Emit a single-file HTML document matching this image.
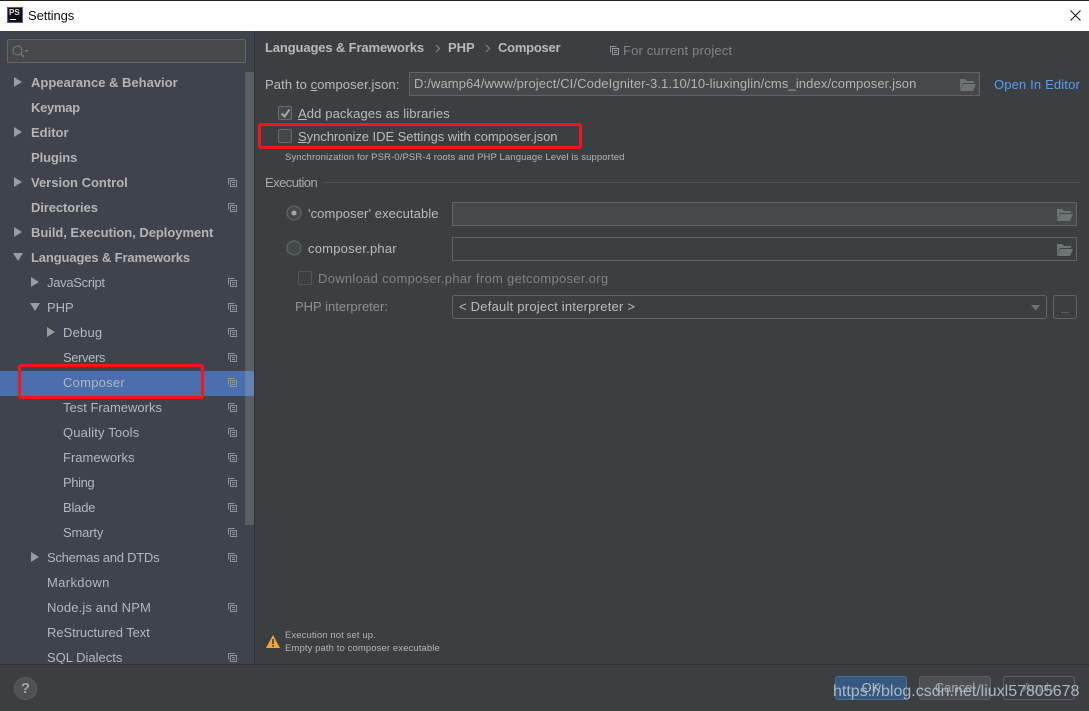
<!DOCTYPE html>
<html><head><meta charset="utf-8"><style>
html,body{margin:0;padding:0;width:1089px;height:711px;overflow:hidden;background:#3c3f41}
body{position:relative;font-family:"Liberation Sans",sans-serif;font-size:13px;color:#bbb}
.a{position:absolute;white-space:nowrap}
.t{position:absolute;white-space:nowrap;height:16px;line-height:16px}
.b{font-weight:bold;color:#b4b4b4}
.n{position:absolute;white-space:nowrap;height:16px;line-height:16px;color:#b4b8bb}
.box{position:absolute;box-sizing:border-box;border:1px solid #646464}
u{text-decoration:underline}
svg{position:absolute;overflow:visible}
</style></head><body>
<div class="a" style="left:0;top:0;width:1089px;height:1px;background:#222"></div>
<div class="a" style="left:0;top:1px;width:1089px;height:30px;background:#fff"></div>
<div class="a" style="left:7px;top:7px;width:16px;height:16px;box-sizing:border-box;background:#111;border:1px solid #7a45c4"></div>
<div class="a" style="left:9px;top:8px;font:bold 8px/10px 'Liberation Sans';color:#ddd">PS</div>
<div class="a" style="left:10px;top:19px;width:6px;height:1px;background:#fff"></div>
<div class="t" style="left:28px;top:8px;color:#111;font-size:13px;letter-spacing:-.1px">Settings</div>
<svg style="left:1070px;top:10px" width="11" height="11"><path d="M.5.5L10.5 10.5M10.5.5L.5 10.5" stroke="#111" fill="none"/></svg>

<div class="a" style="left:0;top:31px;width:254px;height:633px;background:#3e434c"></div>
<div class="a" style="left:254px;top:31px;width:1px;height:633px;background:#323232"></div>
<div class="a" style="left:0;top:664px;width:1089px;height:1px;background:#323232"></div>

<div class="box" style="left:7px;top:39px;width:239px;height:24px;background:#45494a;border-radius:2px"></div>
<svg style="left:12px;top:45px" width="18" height="13"><circle cx="5.5" cy="5.5" r="4.5" stroke="#7a7e80" fill="none"/><path d="M9 9L12 12" stroke="#7a7e80" stroke-width="1.3"/><path d="M12.5 5h4l-2 2.5z" fill="#7a7e80"/></svg>

<div class="a" style="left:245px;top:72px;width:9px;height:453px;background:#5a5d63"></div>
<div class="a" style="left:0;top:371px;width:254px;height:25px;background:#4b6eaf"></div>
<div class="a" style="left:245px;top:371px;width:9px;height:25px;background:#6682b5"></div>

<svg style="left:14px;top:77px" width="9" height="11"><path d="M0 0L8 5L0 10z" fill="#9a9da0"/></svg>
<svg style="left:14px;top:127px" width="9" height="11"><path d="M0 0L8 5L0 10z" fill="#9a9da0"/></svg>
<svg style="left:14px;top:177px" width="9" height="11"><path d="M0 0L8 5L0 10z" fill="#9a9da0"/></svg>
<svg style="left:14px;top:227px" width="9" height="11"><path d="M0 0L8 5L0 10z" fill="#9a9da0"/></svg>
<svg style="left:13px;top:253px" width="11" height="9"><path d="M0 0L10 0L5 8z" fill="#9a9da0"/></svg>
<svg style="left:31px;top:277px" width="9" height="11"><path d="M0 0L8 5L0 10z" fill="#9a9da0"/></svg>
<svg style="left:30px;top:303px" width="11" height="9"><path d="M0 0L10 0L5 8z" fill="#9a9da0"/></svg>
<svg style="left:47px;top:327px" width="9" height="11"><path d="M0 0L8 5L0 10z" fill="#9a9da0"/></svg>
<svg style="left:31px;top:552px" width="9" height="11"><path d="M0 0L8 5L0 10z" fill="#9a9da0"/></svg>

<div class="t b" style="left:31px;top:75px">Appearance &amp; Behavior</div>
<div class="t b" style="left:31px;top:100px;letter-spacing:-.3px">Keymap</div>
<div class="t b" style="left:31px;top:125px">Editor</div>
<div class="t b" style="left:31px;top:150px;letter-spacing:-.1px">Plugins</div>
<div class="t b" style="left:31px;top:175px">Version Control</div>
<div class="t b" style="left:31px;top:200px;letter-spacing:-.1px">Directories</div>
<div class="t b" style="left:31px;top:225px;letter-spacing:-.04px">Build, Execution, Deployment</div>
<div class="t b" style="left:31px;top:250px;letter-spacing:-.13px">Languages &amp; Frameworks</div>
<div class="n" style="left:47px;top:275px;letter-spacing:-.3px">JavaScript</div>
<div class="n" style="left:47px;top:300px">PHP</div>
<div class="n" style="left:63px;top:325px;letter-spacing:.2px">Debug</div>
<div class="n" style="left:63px;top:350px;letter-spacing:-.4px">Servers</div>
<div class="n" style="left:63px;top:375px;letter-spacing:.25px">Composer</div>
<div class="n" style="left:63px;top:400px">Test Frameworks</div>
<div class="n" style="left:63px;top:425px;letter-spacing:.17px">Quality Tools</div>
<div class="n" style="left:63px;top:450px">Frameworks</div>
<div class="n" style="left:63px;top:475px;letter-spacing:-.4px">Phing</div>
<div class="n" style="left:63px;top:500px;letter-spacing:-.2px">Blade</div>
<div class="n" style="left:63px;top:525px;letter-spacing:-.17px">Smarty</div>
<div class="n" style="left:47px;top:550px;letter-spacing:-.25px">Schemas and DTDs</div>
<div class="n" style="left:47px;top:575px;letter-spacing:.35px">Markdown</div>
<div class="n" style="left:47px;top:600px;letter-spacing:.14px">Node.js and NPM</div>
<div class="n" style="left:47px;top:625px;letter-spacing:-.06px">ReStructured Text</div>
<div class="n" style="left:47px;top:650px;height:14px;overflow:hidden">SQL Dialects</div>

<svg width="0" height="0" style="left:0;top:0"><defs><g id="c" fill="none" stroke="#8e9499"><path d="M.5 6.5V.5H6.5"/><rect x="2.5" y="2.5" width="6" height="6"/><path d="M4 4.5H7M4 6.5H7"/></g></defs></svg>
<svg style="left:228px;top:178px" width="9" height="9"><use href="#c"/></svg>
<svg style="left:228px;top:203px" width="9" height="9"><use href="#c"/></svg>
<svg style="left:228px;top:278px" width="9" height="9"><use href="#c"/></svg>
<svg style="left:228px;top:303px" width="9" height="9"><use href="#c"/></svg>
<svg style="left:228px;top:328px" width="9" height="9"><use href="#c"/></svg>
<svg style="left:228px;top:353px" width="9" height="9"><use href="#c"/></svg>
<svg style="left:228px;top:378px" width="9" height="9"><use href="#c"/></svg>
<svg style="left:228px;top:403px" width="9" height="9"><use href="#c"/></svg>
<svg style="left:228px;top:428px" width="9" height="9"><use href="#c"/></svg>
<svg style="left:228px;top:453px" width="9" height="9"><use href="#c"/></svg>
<svg style="left:228px;top:478px" width="9" height="9"><use href="#c"/></svg>
<svg style="left:228px;top:503px" width="9" height="9"><use href="#c"/></svg>
<svg style="left:228px;top:528px" width="9" height="9"><use href="#c"/></svg>
<svg style="left:228px;top:553px" width="9" height="9"><use href="#c"/></svg>
<svg style="left:228px;top:603px" width="9" height="9"><use href="#c"/></svg>
<svg style="left:228px;top:653px" width="9" height="9"><use href="#c"/></svg>

<div class="a" style="left:18px;top:364px;width:186px;height:35px;box-sizing:border-box;border:3px solid #f4161c;border-radius:3px"></div>

<div class="t b" style="left:265px;top:40px;color:#b9b9b9;letter-spacing:-.13px">Languages &amp; Frameworks</div>
<svg style="left:435px;top:44px" width="6" height="9"><path d="M1 1L4.5 4.5L1 8" stroke="#8a8a8a" fill="none"/></svg>
<div class="t b" style="left:448px;top:40px;color:#b9b9b9">PHP</div>
<svg style="left:485px;top:44px" width="6" height="9"><path d="M1 1L4.5 4.5L1 8" stroke="#8a8a8a" fill="none"/></svg>
<div class="t b" style="left:498px;top:40px;color:#b9b9b9;letter-spacing:-.25px">Composer</div>
<svg style="left:610px;top:46px" width="9" height="9"><use href="#c"/></svg>
<div class="t" style="left:623px;top:43px;color:#808486;letter-spacing:.16px">For current project</div>

<div class="t" style="left:265px;top:77px;letter-spacing:.1px">Path to <u>c</u>omposer.json:</div>
<div class="box" style="left:409px;top:72px;width:571px;height:24px;background:#45494a"></div>
<div class="t" style="left:414px;top:76px;color:#b4b4b4;letter-spacing:.11px">D:/wamp64/www/project/CI/CodeIgniter-3.1.10/10-liuxinglin/cms_index/composer.json</div>
<svg style="left:960px;top:79px" width="16" height="12"><path d="M0 2V0H5L7 2H14V4H3L0 11z" fill="#6e7376"/><path d="M3 5H16L13 12H0z" fill="#6e7376"/></svg>
<div class="t" style="left:994px;top:77px;color:#589df6;letter-spacing:.15px">Open In Editor</div>

<div class="box" style="left:278px;top:106px;width:14px;height:14px;background:#43494a;border-color:#6b6b6b;border-radius:2px"></div>
<svg style="left:280px;top:108px" width="11" height="11"><path d="M1.5 5.5L4.5 8.5L9.5 1.5" stroke="#a8a8a8" stroke-width="2" fill="none"/></svg>
<div class="t" style="left:298px;top:106px;letter-spacing:.12px"><u>A</u>dd packages as libraries</div>
<div class="box" style="left:278px;top:129px;width:14px;height:14px;background:#43494a;border-color:#6b6b6b;border-radius:2px"></div>
<div class="t" style="left:298px;top:129px;letter-spacing:-.05px"><u>S</u>ynchronize IDE Settings with composer.json</div>
<div class="a" style="left:258px;top:123px;width:324px;height:26px;box-sizing:border-box;border:3px solid #f4161c;border-radius:3px"></div>
<div class="t" style="left:285px;top:150px;font-size:9.5px;color:#b4b4b4;letter-spacing:.11px">Synchronization for PSR-0/PSR-4 roots and PHP Language Level is supported</div>

<div class="t" style="left:265px;top:175px;color:#a9a9a9;letter-spacing:-.55px">Execution</div>
<div class="a" style="left:323px;top:182px;width:758px;height:1px;background:#515151"></div>

<svg style="left:286px;top:205px" width="16" height="16"><circle cx="8" cy="8" r="7" fill="#43494a" stroke="#6b6b6b"/><circle cx="8" cy="8" r="2.5" fill="#a8a8a8"/></svg>
<div class="t" style="left:308px;top:206px;letter-spacing:.1px">'composer' executable</div>
<div class="box" style="left:452px;top:202px;width:625px;height:24px;background:#45494a"></div>
<svg style="left:1057px;top:209px" width="16" height="12"><path d="M0 2V0H5L7 2H14V4H3L0 11z" fill="#6e7376"/><path d="M3 5H16L13 12H0z" fill="#6e7376"/></svg>

<svg style="left:286px;top:240px" width="16" height="16"><circle cx="8" cy="8" r="7" fill="#43494a" stroke="#6b6b6b"/></svg>
<div class="t" style="left:308px;top:241px;letter-spacing:.22px">composer.phar</div>
<div class="box" style="left:452px;top:237px;width:625px;height:24px;background:#3c3f41"></div>
<svg style="left:1057px;top:244px" width="16" height="12"><path d="M0 2V0H5L7 2H14V4H3L0 11z" fill="#6e7376"/><path d="M3 5H16L13 12H0z" fill="#6e7376"/></svg>

<div class="box" style="left:298px;top:271px;width:14px;height:14px;border-color:#555;border-radius:2px"></div>
<div class="t" style="left:318px;top:271px;color:#808486;letter-spacing:.3px">Download composer.phar from getcomposer.org</div>
<div class="t" style="left:295px;top:299px;color:#8c9093">PHP interpreter:</div>
<div class="box" style="left:452px;top:295px;width:595px;height:24px;border-radius:3px"></div>
<div class="t" style="left:459px;top:299px;letter-spacing:.23px">&lt; Default project interpreter &gt;</div>
<svg style="left:1031px;top:305px" width="10" height="6"><path d="M0 0H9L4.5 5.5z" fill="#6e7072"/></svg>
<div class="box" style="left:1053px;top:295px;width:24px;height:24px;border-radius:3px"></div>
<div class="t" style="left:1061px;top:303px;font-size:10px;color:#8a8a8a">...</div>

<svg style="left:266px;top:635px" width="14" height="13"><path d="M7 0L14 13H0z" fill="#f0a732"/><path d="M6.2 4H7.8V9H6.2zM6.2 10H7.8V11.6H6.2z" fill="#3c3f41"/></svg>
<div class="t" style="left:285px;top:628px;font-size:9.5px;color:#b4b4b4;letter-spacing:.1px">Execution not set up.</div>
<div class="t" style="left:285px;top:641px;font-size:9.5px;color:#b4b4b4;letter-spacing:.1px">Empty path to composer executable</div>

<div class="a" style="left:14px;top:677px;width:23px;height:23px;border-radius:50%;background:#4e5254;box-sizing:border-box;border:1px solid #5a5d5f;text-align:center;font:bold 15px/21px 'Liberation Sans';color:#a5a5a5">?</div>

<div class="box" style="left:835px;top:676px;width:72px;height:24px;background:#365880;border-color:#4c708c;border-radius:3px;text-align:center;line-height:22px;color:#bbb">OK</div>
<div class="box" style="left:919px;top:676px;width:72px;height:24px;background:#4c5052;border-color:#5e6060;border-radius:3px;text-align:center;line-height:22px;color:#a8a8a8">Cancel</div>
<div class="box" style="left:1003px;top:676px;width:72px;height:24px;border-color:#5e6060;border-radius:3px;text-align:center;line-height:22px;color:#777">Apply</div>
<div class="a" style="left:833px;top:682px;font:16px/20px 'Liberation Sans';color:#a9b8c6">https://blog.csdn.net/liuxl57805678</div>
</body></html>
